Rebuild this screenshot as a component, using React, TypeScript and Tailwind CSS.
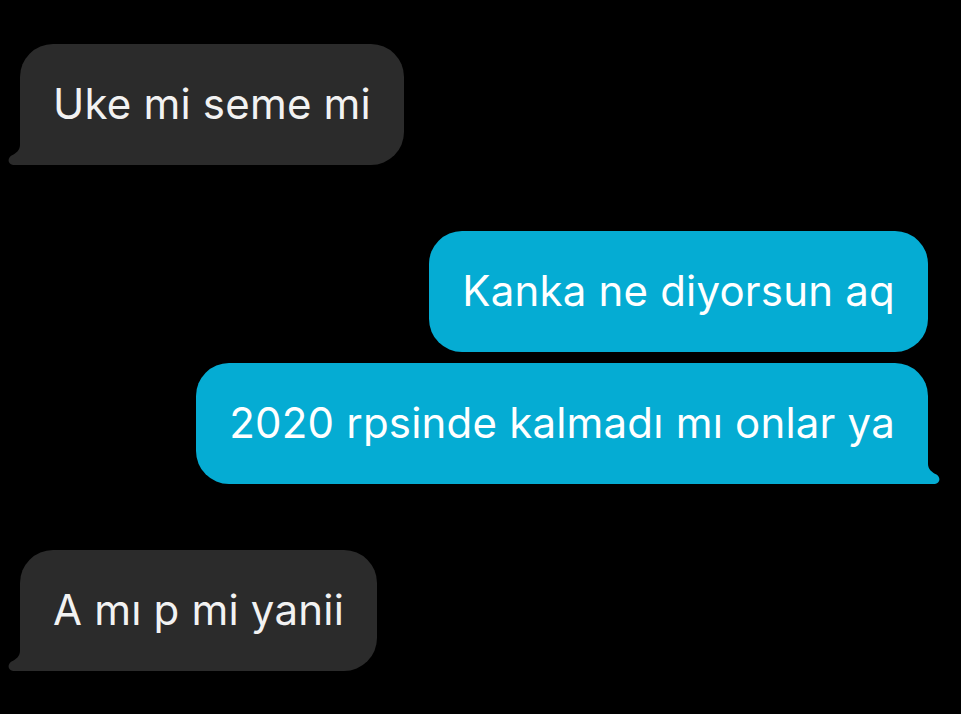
type Msg = { text: string; mine: boolean; tail: boolean };

const messages: Msg[] = [
  { text: "Uke mi seme mi", mine: false, tail: true },
  { text: "Kanka ne diyorsun aq", mine: true, tail: false },
  { text: "2020 rpsinde kalmadı mı onlar ya", mine: true, tail: true },
  { text: "A mı p mi yanii", mine: false, tail: true },
];

function Tail({ mine }: { mine: boolean }) {
  return (
    <svg
      width="24"
      height="20"
      viewBox="0 0 24 20"
      className={
        mine
          ? "absolute -right-[12px] bottom-0 -scale-x-100"
          : "absolute -left-[12px] bottom-0"
      }
    >
      <path
        d="M12 0 C12 5 8 8.5 3.5 10.5 C0 12.5 -0.5 17.5 3 19.2 C4.5 19.9 6 20 8 20 H24 V0 Z"
        fill={mine ? "#05acd3" : "#2b2b2b"}
      />
    </svg>
  );
}

function Bubble({ msg }: { msg: Msg }) {
  const base =
    "relative flex h-[121px] items-center px-[33px] text-[42px] leading-none tracking-[0.2px]";
  const color = msg.mine
    ? "bg-[#05acd3] text-white rounded-[33px]"
    : "bg-[#2b2b2b] text-[#f2f2f2] rounded-[33px]";
  const corner = msg.tail ? (msg.mine ? "rounded-br-none" : "rounded-bl-none") : "";
  return (
    <div className={`${base} ${color} ${corner}`}>
      <span className="-mt-[2px]">{msg.text}</span>
      {msg.tail && <Tail mine={msg.mine} />}
    </div>
  );
}

export default function App() {
  return (
    <div
      className="flex h-[714px] w-[961px] flex-col bg-black pl-[20px] pr-[33px] pt-[44px]"
      style={{ fontFamily: "Inter, Roboto, sans-serif" }}
    >
      <div className="flex justify-start">
        <Bubble msg={messages[0]} />
      </div>
      <div className="mt-[66px] flex justify-end">
        <Bubble msg={messages[1]} />
      </div>
      <div className="mt-[11px] flex justify-end">
        <Bubble msg={messages[2]} />
      </div>
      <div className="mt-[66px] flex justify-start">
        <Bubble msg={messages[3]} />
      </div>
    </div>
  );
}
